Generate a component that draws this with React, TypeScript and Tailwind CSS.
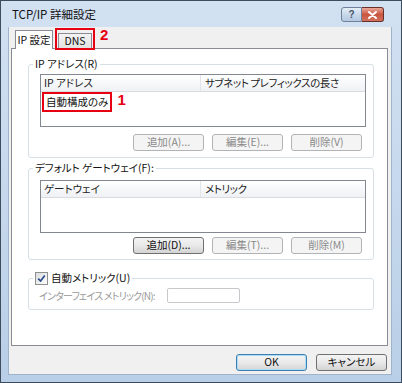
import React from 'react';

const jp = "font-['Noto_Sans_CJK_JP',sans-serif] [font-feature-settings:'palt']";

function Btn({ label, disabled = false, isDefault = false }: { label: string; disabled?: boolean; isDefault?: boolean }) {
  let look = 'border-[#707070] bg-linear-to-b from-[#f4f4f4] via-[#e9e9e9] to-[#d3d3d3] text-[#111]';
  if (disabled) look = 'border-[#b1b4b7] bg-[#f4f4f4] text-[#8a8a8a]';
  if (isDefault)
    look = 'border-[#3c7fb1] bg-linear-to-b from-[#f4f4f4] via-[#eaeaea] to-[#d6d6d6] text-[#111] shadow-[inset_0_0_0_1px_#a9dcf7]';
  return (
    <div className={`w-[71px] h-[17px] rounded-[3px] border ${look} flex items-center justify-center text-[10.5px] leading-none`}>
      {label}
    </div>
  );
}

function ListBox({ col1, col2, children }: { col1: string; col2: string; children?: React.ReactNode }) {
  return (
    <div className="h-[53px] border border-[#828790] bg-white flex flex-col">
      <div className="h-[17px] flex bg-linear-to-b from-white to-[#eff1f4] border-b border-[#d9dbde] text-[10.5px] text-[#222]">
        <div className="w-[160px] pl-[3px] border-r border-[#e3e5e8] flex items-center">{col1}</div>
        <div className="pl-[4px] flex items-center tracking-[-0.4px]">{col2}</div>
      </div>
      {children}
    </div>
  );
}

function Group({ legend, className = '', children }: { legend: React.ReactNode; className?: string; children: React.ReactNode }) {
  return (
    <fieldset className={`border border-[#d5dfe5] rounded-[3px] ${className}`}>
      <legend className="ml-[4px] px-[2px] leading-[14px] text-[10.5px] text-[#111]">{legend}</legend>
      {children}
    </fieldset>
  );
}

export default function App() {
  return (
    <div className={`w-[402px] h-[383px] border border-[#3d4d5e] bg-linear-to-b from-[#d2e1f2] to-[#b9cfe7] flex flex-col ${jp}`}>
      {/* title bar */}
      <div className="h-[26px] flex items-start justify-between">
        <div className="pl-[11px] pt-[6px] text-[11.5px] leading-[14px] text-[#111]">TCP/IP 詳細設定</div>
        <div className="flex pt-[6px] pr-[17px]">
          <div className="w-[21px] h-[15px] rounded-l-[3px] border border-[#6f819a] bg-linear-to-b from-[#e4edf7] via-[#c9d9eb] to-[#b4c8e0] flex items-center justify-center text-[10px] font-bold text-[#46566b] font-['Liberation_Sans',sans-serif]">
            ?
          </div>
          <div className="w-[22px] h-[15px] rounded-r-[3px] border border-l-0 border-[#6b2f2a] bg-linear-to-b from-[#e9a99b] via-[#c9553f] to-[#d0735e] flex items-center justify-center">
            <svg width="9" height="8" viewBox="0 0 9 8">
              <path d="M1 1 L8 7 M8 1 L1 7" stroke="white" strokeWidth="2" strokeLinecap="round" />
            </svg>
          </div>
        </div>
      </div>

      {/* client area */}
      <div className="flex-1 mx-[7px] mr-[9px] mb-[7px] bg-[#f0f0f0] border-x border-b border-[#9fb4cb] flex flex-col pl-[2px] pr-[3px]">
        {/* tabs */}
        <div className="h-[19px] mt-[2px] flex items-end">
          <div className="relative z-10 ml-[4px] -mb-px h-[19px] w-[38px] border border-b-0 border-[#898c95] bg-white flex items-center justify-center text-[10.5px] text-[#111]">
            IP 設定
          </div>
          <div className="relative z-10 ml-[2px] -mb-[2px] border-2 border-[#e60012] px-[1px] pt-[3px]">
            <div className="w-[34px] h-[15px] border border-b-0 border-[#898c95] bg-linear-to-b from-[#f3f3f3] to-[#e2e2e2] flex items-center justify-center text-[10.5px] text-[#111]">
              DNS
            </div>
          </div>
          <div className="self-start ml-[5px] -mt-[1px] text-[15px] leading-[14px] font-bold text-[#e60012] font-['Liberation_Sans',sans-serif]">
            2
          </div>
        </div>

        {/* tab page */}
        <div className="h-[298px] border border-[#898c95] bg-white flex flex-col pl-[16px] pr-[13px] pt-[8px]">
          <Group legend="IP アドレス(R)">
            <div className="pl-[11px] pr-[7px] pt-[3px] pb-[6px]">
              <ListBox col1="IP アドレス" col2="サブネット プレフィックスの長さ">
                <div className="flex items-start">
                  <span className="ml-[1px] h-[20px] border-2 border-[#e60012] px-[2px] flex items-center text-[10.5px] text-[#111]">
                    自動構成のみ
                  </span>
                  <span className="ml-[5px] text-[15px] leading-[15px] font-bold text-[#e60012] font-['Liberation_Sans',sans-serif]">
                    1
                  </span>
                </div>
              </ListBox>
              <div className="mt-[7px] pr-[4px] flex justify-end gap-[8px]">
                <Btn label="追加(A)..." disabled />
                <Btn label="編集(E)..." disabled />
                <Btn label="削除(V)" disabled />
              </div>
            </div>
          </Group>

          <Group legend="デフォルト ゲートウェイ(F):" className="mt-[3px]">
            <div className="pl-[11px] pr-[7px] pt-[5px] pb-[5px]">
              <ListBox col1="ゲートウェイ" col2="メトリック" />
              <div className="mt-[4px] pr-[4px] flex justify-end gap-[8px]">
                <Btn label="追加(D)..." />
                <Btn label="編集(T)..." disabled />
                <Btn label="削除(M)" disabled />
              </div>
            </div>
          </Group>

          <Group
            className="mt-[11px]"
            legend={
              <span className="flex items-center gap-[3px]">
                <span className="w-[13px] h-[13px] border border-[#8e8f8f] bg-linear-to-br from-[#dcdcdc] to-white flex items-center justify-center">
                  <svg width="9" height="9" viewBox="0 0 9 9">
                    <path d="M1.2 4.6 L3.6 7 L7.8 1.6" fill="none" stroke="#2b4a8c" strokeWidth="1.7" />
                  </svg>
                </span>
                <span>自動メトリック(U)</span>
              </span>
            }
          >
            <div className="pl-[10px] pt-[3px] pb-[6px] flex items-center">
              <div className="w-[128px] shrink-0 whitespace-nowrap tracking-[-0.8px] text-[10px] text-[#9a9a9a]">インターフェイス メトリック(N):</div>
              <div className="w-[73px] h-[15px] rounded-[2px] border border-[#c6c8cc] bg-white" />
            </div>
          </Group>
        </div>

        {/* dialog buttons */}
        <div className="flex-1 flex justify-end items-start pt-[8px] pr-[1px] gap-[9px]">
          <Btn label="OK" isDefault />
          <Btn label="キャンセル" />
        </div>
      </div>
    </div>
  );
}
